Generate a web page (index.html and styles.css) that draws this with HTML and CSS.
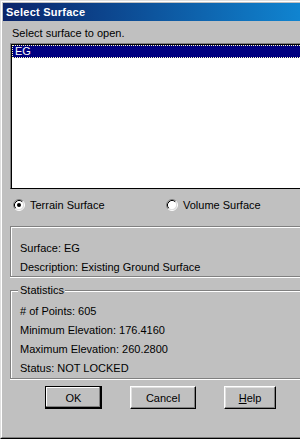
FILE: index.html
```html
<!DOCTYPE html>
<html>
<head>
<meta charset="utf-8">
<link rel="stylesheet" href="styles.css">
</head>
<body>
<div class="window">
  <div class="frame">
    <div class="titlebar">Select Surface</div>
    <div class="content">
      <div class="prompt">Select surface to open.</div>
      <div class="listbox">
        <div class="item selected">EG</div>
      </div>
      <div class="radios">
        <label class="radio radio-terrain">
          <svg class="radio-icon" width="12" height="12" viewBox="0 0 12 12">
            <circle cx="6" cy="6" r="4.5" fill="#fff"/>
            <path d="M2.11 9.89 A5.5 5.5 0 0 1 9.89 2.11" fill="none" stroke="#808080"/>
            <path d="M9.89 2.11 A5.5 5.5 0 0 1 2.11 9.89" fill="none" stroke="#fff"/>
            <path d="M2.82 9.18 A4.5 4.5 0 0 1 9.18 2.82" fill="none" stroke="#000"/>
            <path d="M9.18 2.82 A4.5 4.5 0 0 1 2.82 9.18" fill="none" stroke="#dfdfdf"/>
            <circle cx="6" cy="6" r="2" fill="#000"/>
          </svg>
          <span>Terrain Surface</span>
        </label>
        <label class="radio radio-volume">
          <svg class="radio-icon" width="12" height="12" viewBox="0 0 12 12">
            <circle cx="6" cy="6" r="4.5" fill="#fff"/>
            <path d="M2.11 9.89 A5.5 5.5 0 0 1 9.89 2.11" fill="none" stroke="#808080"/>
            <path d="M9.89 2.11 A5.5 5.5 0 0 1 2.11 9.89" fill="none" stroke="#fff"/>
            <path d="M2.82 9.18 A4.5 4.5 0 0 1 9.18 2.82" fill="none" stroke="#000"/>
            <path d="M9.18 2.82 A4.5 4.5 0 0 1 2.82 9.18" fill="none" stroke="#dfdfdf"/>
          </svg>
          <span>Volume Surface</span>
        </label>
      </div>
      <div class="group group-info">
        <div class="line">Surface: EG</div>
        <div class="line">Description: Existing Ground Surface</div>
      </div>
      <div class="group group-stats">
        <span class="group-label">Statistics</span>
        <div class="line"># of Points: 605</div>
        <div class="line">Minimum Elevation: 176.4160</div>
        <div class="line">Maximum Elevation: 260.2800</div>
        <div class="line">Status: NOT LOCKED</div>
      </div>
      <div class="buttons">
        <button class="btn btn-default btn-ok">OK</button>
        <button class="btn btn-cancel">Cancel</button>
        <button class="btn btn-help"><u>H</u>elp</button>
      </div>
    </div>
  </div>
</div>
</body>
</html>
```

FILE: styles.css
```css
html, body {
  margin: 0;
  padding: 0;
  width: 300px;
  height: 439px;
  overflow: hidden;
  background: #c0c0c0;
}

.window {
  box-sizing: border-box;
  width: 300px;
  height: 439px;
  border-top: 1px solid #dfdfdf;
  border-left: 1px solid #dfdfdf;
  border-bottom: 1px solid #000;
  background: #c0c0c0;
  font-family: "Liberation Sans", Arial, sans-serif;
  font-size: 11px;
  color: #000;
}

.frame {
  box-sizing: border-box;
  height: 100%;
  border-top: 1px solid #fff;
  border-left: 1px solid #fff;
  border-bottom: 1px solid #808080;
  padding: 1px 0 0 1px;
}

.titlebar {
  height: 18px;
  line-height: 18px;
  padding-left: 3px;
  background: linear-gradient(to right, #0a246a 0%, #1084d0 100%);
  color: #fff;
  font-weight: bold;
  font-size: 11px;
  letter-spacing: 0.25px;
  white-space: nowrap;
}

.content {
  padding-left: 7px;
}

.prompt {
  margin-top: 6px;
  line-height: 13px;
  height: 13px;
  padding-left: 2px;
}

.listbox {
  box-sizing: border-box;
  margin-top: 3px;
  height: 146px;
  background: #fff;
  border-top: 1px solid #808080;
  border-left: 1px solid #808080;
  border-bottom: 1px solid #000;
  box-shadow: inset 1px 1px 0 #000;
  padding: 1px 0 0 1px;
}

.item {
  height: 13px;
  line-height: 11px;
  padding-left: 2px;
}

.item.selected {
  background: #000080;
  color: #fff;
  border: 1px dotted #ffffc0;
  border-right: 0;
  box-sizing: border-box;
}

.radios {
  display: flex;
  margin-top: 8px;
  height: 16px;
  align-items: center;
}

.radio {
  display: flex;
  align-items: center;
}

.radio-terrain {
  margin-left: 3px;
  width: 153px;
}

.radio-icon {
  flex: none;
  margin-right: 5px;
}

.group {
  position: relative;
  box-sizing: border-box;
  border: 1px solid #808080;
  border-right: 0;
  box-shadow: 0 1px 0 #fff, inset 1px 1px 0 #fff;
  padding-left: 9px;
}

.group-info {
  margin-top: 13px;
  height: 51px;
  padding-top: 15px;
}

.group-stats {
  margin-top: 13px;
  height: 89px;
  padding-top: 14px;
}

.group-label {
  position: absolute;
  left: 7px;
  top: -7px;
  padding: 0 1px 0 2px;
  background: #c0c0c0;
  line-height: 13px;
}

.line {
  line-height: 13px;
  height: 13px;
  white-space: nowrap;
}

.group .line + .line {
  margin-top: 6px;
}

.buttons {
  display: flex;
  margin-top: 7px;
}

.btn {
  box-sizing: border-box;
  height: 23px;
  padding: 0;
  margin: 0;
  background: #c0c0c0;
  font-family: "Liberation Sans", Arial, sans-serif;
  font-size: 11px;
  color: #000;
  border-top: 1px solid #fff;
  border-left: 1px solid #fff;
  border-bottom: 1px solid #000;
  border-right: 1px solid #000;
  box-shadow: inset -1px -1px 0 #808080, inset 1px 1px 0 #dfdfdf;
}

.btn-default {
  border: 1px solid #000;
  box-shadow: inset -1px -1px 0 #000, inset -2px -2px 0 #808080, inset 1px 1px 0 #fff;
}

.btn-ok {
  margin-left: 35px;
  width: 57px;
}

.btn-cancel {
  margin-left: 28px;
  width: 66px;
}

.btn-help {
  margin-left: 28px;
  width: 52px;
}
```
